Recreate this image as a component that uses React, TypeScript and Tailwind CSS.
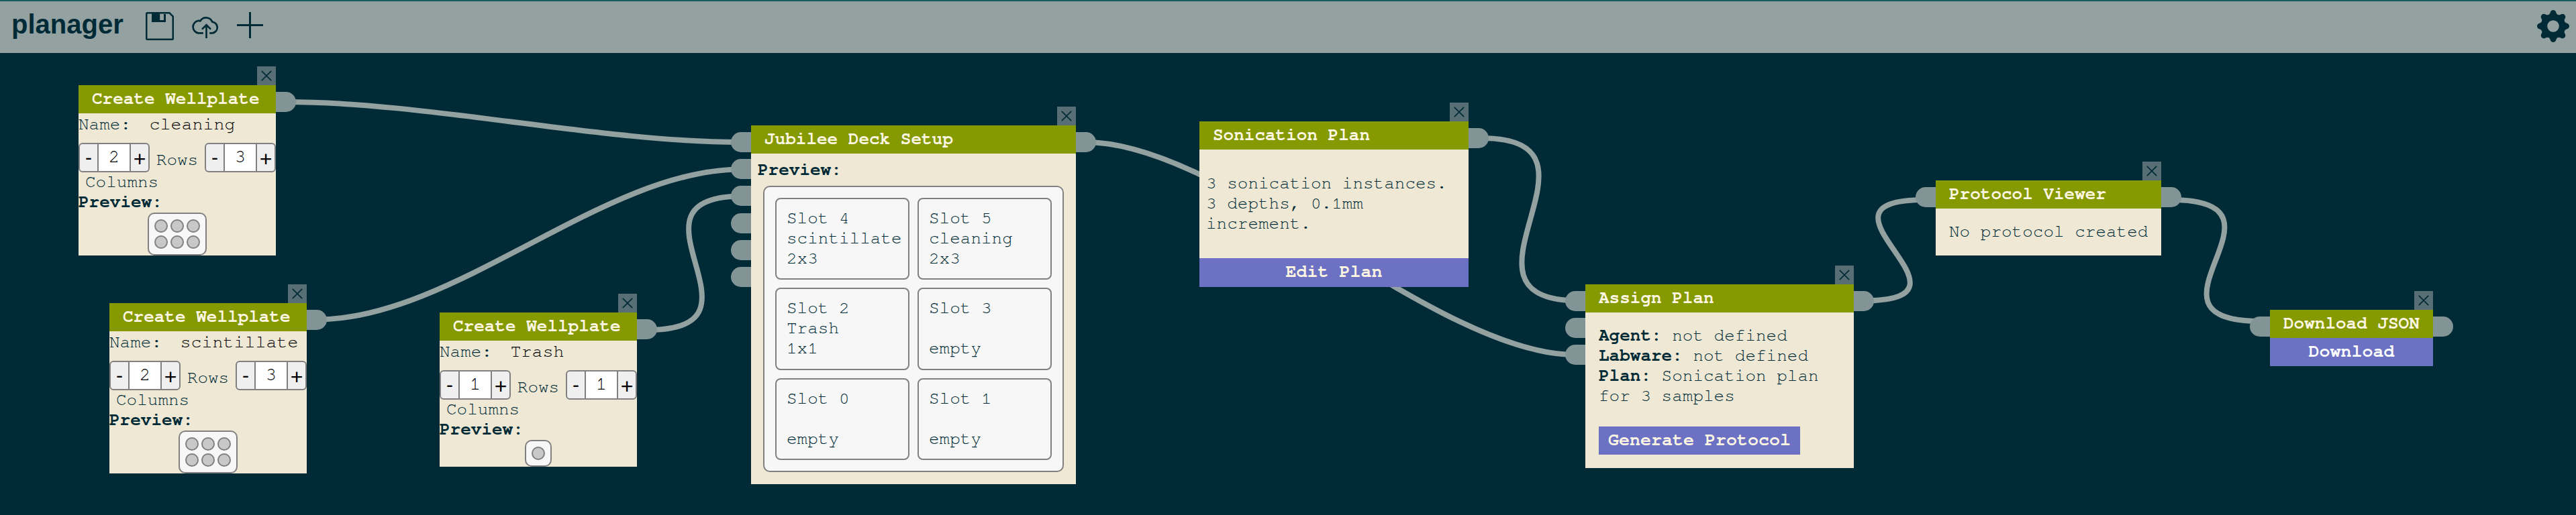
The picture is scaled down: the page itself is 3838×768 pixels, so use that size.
import React from "react";

type Point = [number, number];

const cables: { from: Point; to: Point; reach: number }[] = [
  { from: [426, 152], to: [1104, 212], reach: 210 },
  { from: [472, 476.5], to: [1104, 252.5], reach: 206 },
  { from: [966, 492], to: [1106, 292.5], reach: 196 },
  { from: [1618, 212], to: [2347, 529], reach: 208 },
  { from: [2208, 206], to: [2352, 448.5], reach: 212 },
  { from: [2776, 448.5], to: [2868, 298], reach: 196 },
  { from: [3235, 298], to: [3367, 479], reach: 202 },
];

function Cables() {
  return (
    <svg className="absolute inset-0" width="3838" height="768" fill="none" stroke="#93a1a1" strokeWidth="8">
      {cables.map(({ from, to, reach }, i) => (
        <path
          key={i}
          d={`M${from[0]} ${from[1]}C${from[0] + reach} ${from[1]} ${to[0] - reach} ${to[1]} ${to[0]} ${to[1]}`}
        />
      ))}
    </svg>
  );
}

function SaveIcon() {
  return (
    <svg width="42" height="42" viewBox="0 0 42 42" fill="none" stroke="#002b36">
      <path d="M3 1.25H35.5L40.75 6.5V39.5Q40.75 40.75 39.5 40.75H2.5Q1.25 40.75 1.25 39.5V2.5Q1.25 1.25 2.5 1.25Z" strokeWidth="2.5" />
      <path d="M9 1.5H21.2V12H27V3H30V15H9Z" fill="#002b36" stroke="none" />
    </svg>
  );
}

function CloudIcon() {
  return (
    <svg width="42" height="42" viewBox="0 0 42 42" fill="none" stroke="#002b36" strokeWidth="2.7">
      <path d="M17.8 31.3H10.6A9.3 9.3 0 0 1 10.4 12.9Q11.6 12.8 13.3 13.3A10 10 0 0 1 31.2 14.6A8.4 8.4 0 0 1 31.4 31.3H27.2" />
      <path d="M22.5 39V19.5M16 25.6L22.5 19.2L29 25.6" />
    </svg>
  );
}

function PlusIcon() {
  return (
    <svg width="40" height="40" viewBox="0 0 40 40" fill="none" stroke="#002b36" strokeWidth="3">
      <path d="M0 19.5H39M19.5 0V39" />
    </svg>
  );
}

function GearIcon() {
  return (
    <svg width="48" height="48" viewBox="0 0 16 16" fill="#002b36">
      <path d="M9.405 1.05c-.413-1.4-2.397-1.4-2.81 0l-.1.34a1.464 1.464 0 0 1-2.105.872l-.31-.17c-1.283-.698-2.686.705-1.987 1.987l.169.311c.446.82.023 1.841-.872 2.105l-.34.1c-1.4.413-1.4 2.397 0 2.81l.34.1a1.464 1.464 0 0 1 .872 2.105l-.17.31c-.698 1.283.705 2.686 1.987 1.987l.311-.169a1.464 1.464 0 0 1 2.105.872l.1.34c.413 1.4 2.397 1.4 2.81 0l.1-.34a1.464 1.464 0 0 1 2.105-.872l.31.17c1.283.698 2.686-.705 1.987-1.987l-.169-.311a1.464 1.464 0 0 1 .872-2.105l.34-.1c1.4-.413 1.4-2.397 0-2.81l-.34-.1a1.464 1.464 0 0 1-.872-2.105l.17-.31c.698-1.283-.705-2.686-1.987-1.987l-.311.169a1.464 1.464 0 0 1-2.105-.872zM8 10.93a2.929 2.929 0 1 1 0-5.86 2.929 2.929 0 0 1 0 5.858z" />
    </svg>
  );
}

function Ports({ side, count }: { side: "left" | "right"; count: number }) {
  return (
    <div
      className={
        side === "left"
          ? "absolute top-[10px] right-full flex flex-col gap-[10.2px]"
          : "absolute top-[10px] left-full flex flex-col gap-[10.2px]"
      }
    >
      {Array.from({ length: count }, (_, i) => (
        <div
          key={i}
          className={
            side === "left"
              ? "h-[30px] w-[30px] rounded-l-[15px] bg-[#839496]"
              : "h-[30px] w-[30px] rounded-r-[15px] bg-[#839496]"
          }
        />
      ))}
    </div>
  );
}

function Node(props: {
  title: string;
  place: string;
  inputs?: number;
  outputs?: number;
  children: React.ReactNode;
}) {
  return (
    <section className={`absolute flex flex-col bg-[#eee8d5] ${props.place}`}>
      <button className="absolute right-0 bottom-full flex h-7 w-7 items-center justify-center bg-[#586e75]">
        <svg width="16" height="16" viewBox="0 0 16 16" stroke="#002b36" strokeWidth="1.7">
          <path d="M0.8 0.8L15.2 15.2M15.2 0.8L0.8 15.2" />
        </svg>
      </button>
      <Ports side="left" count={props.inputs ?? 0} />
      <Ports side="right" count={props.outputs ?? 1} />
      <h2 className="h-[42px] bg-[#859900] px-5 pt-[5px] font-bold whitespace-nowrap text-[#fdf6e3]">{props.title}</h2>
      {props.children}
    </section>
  );
}

function Stepper({ value }: { value: number }) {
  return (
    <div className="flex h-11 w-[106px] overflow-hidden rounded-[6px] border-2 border-[#808080] bg-[#efefef] text-black">
      <button className="w-[26px] font-['Liberation_Sans'] text-[30px] leading-[36px]">-</button>
      <span className="flex-1 border-x-2 border-[#808080] bg-white text-center text-[26.67px] leading-[38px]">
        {value}
      </span>
      <button className="w-[26px] pt-[3px] font-['Liberation_Sans'] text-[32px] leading-[36px]">+</button>
    </div>
  );
}

function Wellplate({ name, rows, columns, place }: { name: string; rows: number; columns: number; place: string }) {
  return (
    <Node title="Create Wellplate" place={place}>
      <div className="flex h-11 pt-px whitespace-pre">
        <span>Name: </span>
        <span className="pl-[12px] text-[26.67px] text-black">{name}</span>
      </div>
      <div className="flex h-[43px] items-start justify-between">
        <Stepper value={rows} />
        <span className="pt-[10px]">Rows</span>
        <Stepper value={columns} />
      </div>
      <div className="pl-[10px]">Columns</div>
      <div className="font-bold">Preview:</div>
      <div className="mt-px flex flex-col gap-1 self-center rounded-[10px] border-2 border-[#808080] bg-[#f7f7f7] p-2">
        {Array.from({ length: rows }, (_, r) => (
          <div key={r} className="flex gap-1">
            {Array.from({ length: columns }, (_, c) => (
              <span key={c} className="h-5 w-5 rounded-full border-2 border-[#808080] bg-[#c8c8c8]" />
            ))}
          </div>
        ))}
      </div>
    </Node>
  );
}

const slots = [
  ["Slot 4", "scintillate", "2x3"],
  ["Slot 5", "cleaning", "2x3"],
  ["Slot 2", "Trash", "1x1"],
  ["Slot 3", "", "empty"],
  ["Slot 0", "", "empty"],
  ["Slot 1", "", "empty"],
];

export default function App() {
  return (
    <main className="relative flex h-[768px] w-[3838px] flex-col overflow-hidden bg-[#002b36] font-[FreeMono,'Courier_New','Liberation_Mono',monospace] text-[26px] leading-[30px] text-[#002b36]">
      <header className="flex h-[79px] shrink-0 items-start border-t-2 border-[#155e63] bg-[#93a1a1] pt-4 pr-[10px] pl-[17px]">
        <h1 className="-mt-0.5 w-[200px] font-['Liberation_Sans',Arial,sans-serif] text-[40px] leading-[40px] font-bold">
          planager
        </h1>
        <SaveIcon />
        <span className="ml-[26px]">
          <CloudIcon />
        </span>
        <span className="ml-[26px]">
          <PlusIcon />
        </span>
        <span className="-mt-[3px] ml-auto">
          <GearIcon />
        </span>
      </header>

      <Cables />

      <Wellplate place="left-[117px] top-[127px] w-[294px]" name="cleaning" rows={2} columns={3} />
      <Wellplate place="left-[163px] top-[452px] w-[294px]" name="scintillate" rows={2} columns={3} />
      <Wellplate place="left-[655px] top-[466px] w-[294px]" name="Trash" rows={1} columns={1} />

      <Node title="Jubilee Deck Setup" place="left-[1119px] top-[187px] w-[484px] h-[535px]" inputs={6}>
        <div className="px-[10px] pt-[9px] font-bold">Preview:</div>
        <div className="mt-[9px] ml-[18px] grid h-[427px] w-[448px] grid-cols-2 grid-rows-3 gap-3 rounded-[10px] border-2 border-[#808080] bg-[#f7f7f7] p-4">
          {slots.map(([slot, name, size]) => (
            <div key={slot} className="flex flex-col rounded-[8px] border-2 border-[#808080] px-[15px] pt-[13px]">
              <span className="h-[30px]">{slot}</span>
              <span className="h-[30px]">{name}</span>
              <span className="h-[30px]">{size}</span>
            </div>
          ))}
        </div>
      </Node>

      <Node title="Sonication Plan" place="left-[1787px] top-[181px] w-[401px]">
        <p className="h-[162px] px-[10px] pt-[35px]">
          3 sonication instances.
          <br />3 depths, 0.1mm increment.
        </p>
        <button className="h-[43px] bg-[#6c71c4] pb-[3px] text-[26.67px] font-bold text-[#fdf6e3]">Edit Plan</button>
      </Node>

      <Node title="Assign Plan" place="left-[2362px] top-[424px] w-[400px] h-[274px]" inputs={3}>
        <div className="px-5 pt-[19px]">
          <p>
            <b>Agent:</b> not defined
          </p>
          <p>
            <b>Labware:</b> not defined
          </p>
          <p>
            <b>Plan:</b> Sonication plan for 3 samples
          </p>
        </div>
        <button className="mt-[31px] ml-5 h-[42px] w-[300px] bg-[#6c71c4] pb-0.5 text-[26.67px] font-bold text-[#fdf6e3]">
          Generate Protocol
        </button>
      </Node>

      <Node title="Protocol Viewer" place="left-[2884px] top-[269px] w-[336px]" inputs={1}>
        <p className="h-[70px] px-5 pt-[19px] whitespace-nowrap">No protocol created</p>
      </Node>

      <Node title="Download JSON" place="left-[3382px] top-[462px] w-[243px]" inputs={1}>
        <button className="h-[42px] bg-[#6c71c4] pb-0.5 text-[26.67px] font-bold text-white">Download</button>
      </Node>
    </main>
  );
}
